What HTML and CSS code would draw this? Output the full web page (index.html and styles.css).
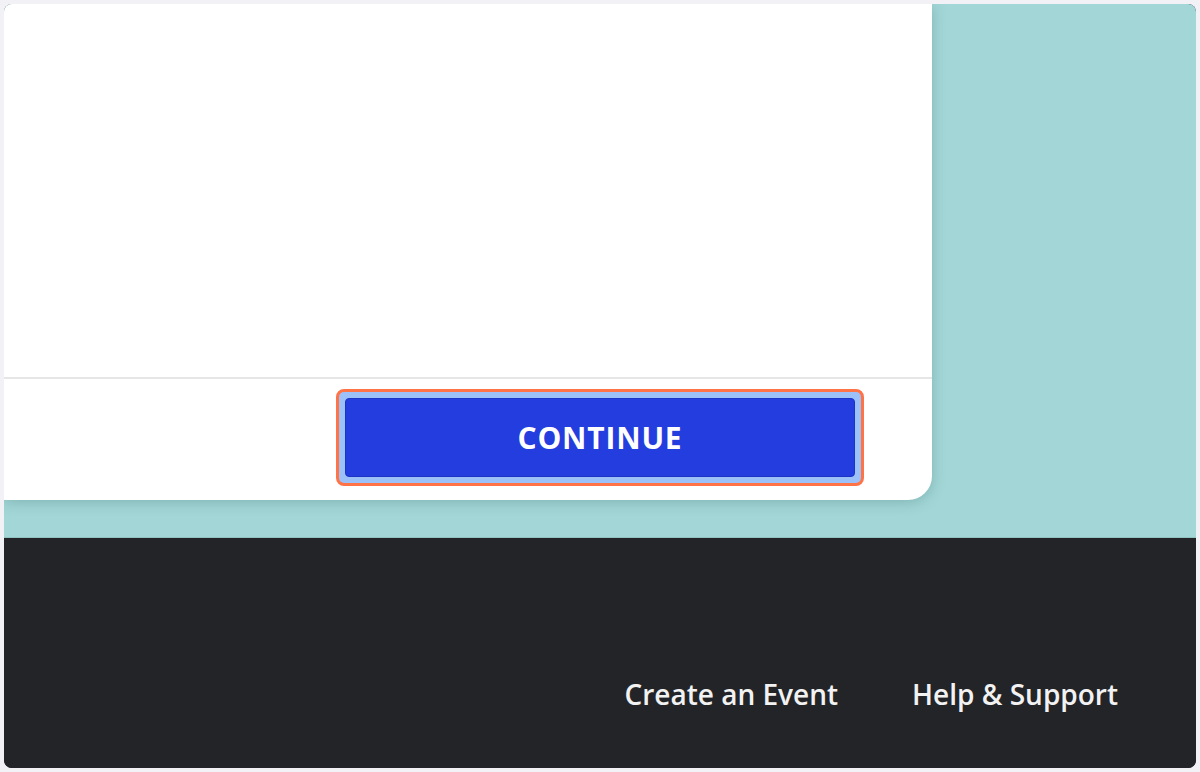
FILE: index.html
```html
<!DOCTYPE html>
<html>
<head>
<meta charset="utf-8">
<link rel="stylesheet" href="styles.css">
</head>
<body>
<div class="screen">
  <main class="stage">
    <section class="card">
      <div class="card-body"></div>
      <div class="card-actions">
        <div class="focus-ring">
          <button class="btn">CONTINUE</button>
        </div>
      </div>
    </section>
  </main>
  <footer class="footer">
    <nav class="links">
      <a class="link">Create an Event</a>
      <a class="link">Help &amp; Support</a>
    </nav>
  </footer>
</div>
</body>
</html>
```
FILE: styles.css
```css
html, body {
  margin: 0;
  padding: 0;
}
body {
  background: #f2f1f6;
  padding: 4px;
  width: 1200px;
  height: 772px;
  box-sizing: border-box;
  overflow: hidden;
  font-family: "Open Sans", "Liberation Sans", sans-serif;
}
.screen {
  height: 764px;
  border-radius: 8px;
  overflow: hidden;
  display: flex;
  flex-direction: column;
  background: #232428;
}
.stage {
  height: 534px;
  background: #a3d7d7;
  flex: none;
  border-bottom: 1px solid #8fc4c2;
  box-sizing: border-box;
}
.card {
  width: 928px;
  height: 496px;
  background: #fff;
  border-bottom-right-radius: 24px;
  box-shadow: 0 2px 14px rgba(40, 90, 90, 0.28);
  display: flex;
  flex-direction: column;
}
.card-body {
  height: 373px;
  border-bottom: 2px solid #e6e6e6;
}
.card-actions {
  display: flex;
  justify-content: flex-end;
  padding: 10px 68px 0 0;
}
.focus-ring {
  border: 3px solid #ff7347;
  border-radius: 8px;
  background: #9cc1f9;
  padding: 6px;
  width: 510px;
  height: 79px;
}
.btn {
  display: block;
  width: 100%;
  height: 100%;
  background: #233ddf;
  border: 1px solid #1c33c4;
  border-radius: 4px;
  color: #fff;
  font-family: "Open Sans", "Liberation Sans", sans-serif;
  font-weight: 700;
  font-size: 30px;
  letter-spacing: 0.8px;
  padding: 0;
}
.footer {
  flex: 1;
  background: #232428;
}
.links {
  display: flex;
  justify-content: flex-end;
  gap: 74px;
  padding: 140px 78px 0 0;
}
.link {
  color: #f2f2f2;
  font-size: 28px;
  font-weight: 600;
  line-height: 32px;
}
```
